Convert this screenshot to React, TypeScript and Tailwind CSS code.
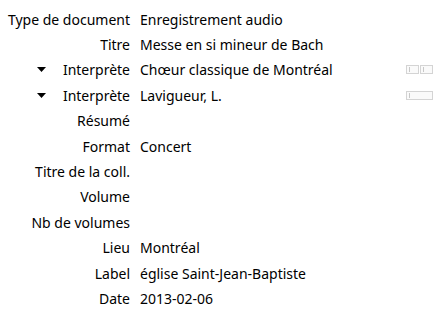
import React from 'react'

type Row = { label: string; value?: string; creator?: boolean; buttons?: number }

const rows: Row[] = [
  { label: 'Type de document', value: 'Enregistrement audio' },
  { label: 'Titre', value: 'Messe en si mineur de Bach' },
  { label: 'Interprète', value: 'Chœur classique de Montréal', creator: true, buttons: 2 },
  { label: 'Interprète', value: 'Lavigueur, L.', creator: true, buttons: 1 },
  { label: 'Résumé' },
  { label: 'Format', value: 'Concert' },
  { label: 'Titre de la coll.' },
  { label: 'Volume' },
  { label: 'Nb de volumes' },
  { label: 'Lieu', value: 'Montréal' },
  { label: 'Label', value: 'église Saint-Jean-Baptiste' },
  { label: 'Date', value: '2013-02-06' },
]

function MiniBox({ wide }: { wide?: boolean }) {
  return (
    <div className={`h-[9px] ${wide ? 'w-[27px]' : 'w-[13px]'} border border-[#d4d4d4] bg-[#fafafa] flex items-center pl-[2px]`}>
      <div className="w-px h-[5px] bg-[#c8c8c8]" />
    </div>
  )
}

export default function App() {
  return (
    <div
      className="w-[440px] h-[313px] bg-white text-black pt-[6.5px] text-[14px]"
      style={{ fontFamily: '"Segoe UI", "Noto Sans", sans-serif' }}
    >
      {rows.map((r, i) => (
        <div key={i} className="flex items-center h-[25.4px]">
          <div className="w-[130px] flex items-center justify-end">
            {r.creator && (
              <svg width="9" height="5" viewBox="0 0 9 5" className="mr-[17px]">
                <polygon points="0,0 9,0 4.5,5" fill="#000" />
              </svg>
            )}
            <span className="whitespace-nowrap">{r.label}</span>
          </div>
          <div className="ml-[10px] flex-1 whitespace-nowrap">{r.value}</div>
          {r.buttons === 2 && (
            <div className="flex gap-[1px] mr-[7px]">
              <MiniBox />
              <MiniBox />
            </div>
          )}
          {r.buttons === 1 && (
            <div className="flex mr-[7px]">
              <MiniBox wide />
            </div>
          )}
        </div>
      ))}
    </div>
  )
}
